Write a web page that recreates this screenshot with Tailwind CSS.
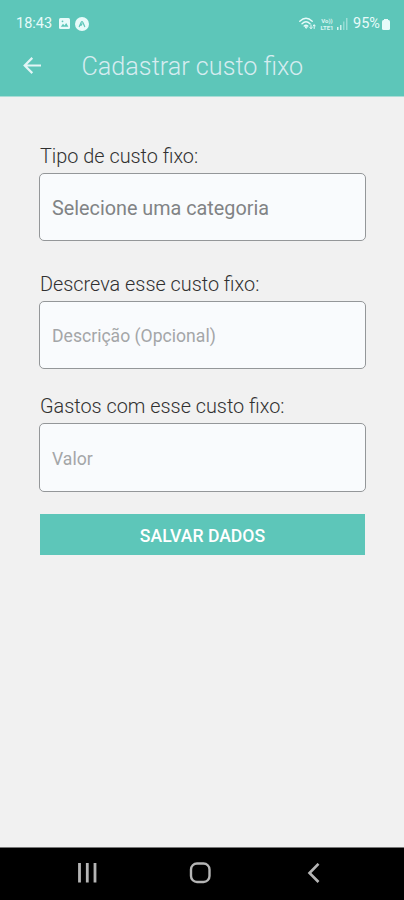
<!DOCTYPE html>
<html lang="pt-BR">
<head>
    <meta charset="UTF-8">
    <meta name="viewport" content="width=device-width, initial-scale=1.0">
    <title>Cadastrar custo fixo</title>
    <script src="https://cdn.jsdelivr.net/npm/@tailwindcss/browser@4"></script>
    <style>
        body { font-family: Roboto, 'Liberation Sans', sans-serif; }
    </style>
</head>
<body class="bg-[#f1f1f1]">
    <div class="flex flex-col h-[900px] w-[404px] overflow-hidden">
        <header class="h-[97px] shrink-0 bg-[#5dc6b9] border-b border-[#a9ddd6]">
            <!-- Status bar -->
            <div class="flex h-[47px] items-center pl-4 pr-[14px] text-[#e8fbfa]">
                <span class="w-[37px] text-[14.5px] whitespace-nowrap">18:43</span>
                <svg class="ml-[6px] w-[11px] h-[11px]" viewBox="0 0 11 11">
                    <rect width="11" height="11" rx="1.5" fill="currentColor"/>
                    <path d="M1.8 8.8 4 5.8l1.5 1.7L7.2 5l2.2 3.8z" fill="#5dc6b9"/>
                    <circle cx="3.5" cy="3.3" r=".9" fill="#5dc6b9"/>
                </svg>
                <svg class="ml-[5px] w-[14px] h-[14px]" viewBox="0 0 14 14">
                    <circle cx="7" cy="7" r="7" fill="currentColor"/>
                    <path d="M4.3 9.6 6.2 5.2Q7 3.8 7.8 5.2l1.9 4.4M6 8.4 7 6.9" fill="none" stroke="#5dc6b9" stroke-width="1.2" stroke-linecap="round"/>
                </svg>
                <div class="ml-auto flex items-center">
                    <svg class="w-[17px] h-[13px]" viewBox="0 0 17 13" fill="none" stroke="currentColor" stroke-width="1.4" stroke-linecap="round">
                        <path d="M.8 4.2Q7 -1.5 13.2 4.2M3 6.7Q7 3 11 6.7M5.2 9Q7 7.5 8.8 9"/>
                        <path d="M7 11.2 5.9 9.7h2.2z" fill="currentColor" stroke-width=".8"/>
                        <path d="M12 8v3.5M10.9 10.5l1.1 1.2 1.1-1.2M15.2 11.5V8M14.1 9l1.1-1.2L16.3 9" stroke-width="1"/>
                    </svg>
                    <div class="ml-[4px] w-[14px] flex flex-col items-center text-[6px] leading-[7px] font-bold opacity-90">
                        <span>Vo))</span>
                        <span>LTE1</span>
                    </div>
                    <svg class="ml-[3px] w-[11px] h-[12px]" viewBox="0 0 11 12" fill="currentColor">
                        <rect y="9" width="1.5" height="3" opacity=".9"/>
                        <rect x="3" y="7" width="1.5" height="5" opacity=".8"/>
                        <rect x="6" y="3.5" width="1.5" height="8.5" opacity=".4"/>
                        <rect x="9" width="1.5" height="12" opacity=".45"/>
                    </svg>
                    <span class="ml-[5px] w-[28px] text-[14.5px] whitespace-nowrap">95%</span>
                    <svg class="ml-[1px] mt-[1px] w-[8px] h-[11px]" viewBox="0 0 8 11" fill="currentColor">
                        <rect x="2" width="4" height="2"/>
                        <rect y="1" width="8" height="10" rx="1.5"/>
                    </svg>
                </div>
            </div>
            <!-- App bar -->
            <div class="flex h-[38px] items-center pl-[23px]">
                <svg class="w-[19px] h-[18px]" viewBox="0 0 19 18" fill="none" stroke="#e3f5f6" stroke-width="2.2">
                    <path d="M18 8.5H2M9.3 .9 1.7 8.5l7.6 7.6"/>
                </svg>
                <h1 class="ml-[39.5px] pt-px text-[25.2px] font-light text-[#d6ecf0] whitespace-nowrap">Cadastrar custo fixo</h1>
            </div>
        </header>

        <!-- Form -->
        <main class="flex-1 px-[39px] pt-[47px]">
            <form onsubmit="event.preventDefault()">
                <label class="block h-[29px] pl-px text-[19.85px] leading-[26px] font-light text-[#303030]">Tipo de custo fixo:</label>
                <div class="flex h-[68px] w-[327px] items-center rounded-[5px] border border-[#949799] bg-[#f9fbfd] pl-3 pt-[4px] text-[19.8px] text-[#818385]">Selecione uma categoria</div>

                <label class="mt-[31px] block h-[29px] pl-px text-[19.85px] leading-[26px] font-light text-[#303030]">Descreva esse custo fixo:</label>
                <div class="flex h-[68px] w-[327px] items-center rounded-[5px] border border-[#949799] bg-[#f9fbfd] pl-3 pt-[3px] text-[17.6px] text-[#a4a6a8]">Descrição (Opcional)</div>

                <label class="mt-[25px] block h-[29px] pl-px text-[19.85px] leading-[26px] font-light text-[#303030]">Gastos com esse custo fixo:</label>
                <div class="flex h-[69px] w-[327px] items-center rounded-[5px] border border-[#949799] bg-[#f9fbfd] pl-3 pt-[3px] text-[17.6px] text-[#a4a6a8]">Valor</div>

                <button type="submit" class="mt-[22px] ml-px h-[41px] w-[325px] bg-[#5dc6b9] pt-[3px] text-[17.6px] font-medium text-white">SALVAR DADOS</button>
            </form>
        </main>

        <!-- Android navigation bar -->
        <nav class="flex h-[53px] shrink-0 border-t border-[#777] bg-black text-[#b5b5b5]">
            <svg class="ml-[77px] mt-[15px] w-[20px] h-[20px]" viewBox="0 0 20 20" fill="none" stroke="currentColor" stroke-width="2.8">
                <path d="M2.5 0v19.5M10.3 0v19.5M18 0v19.5"/>
            </svg>
            <svg class="ml-[92px] mt-[14px] w-[22px] h-[22px]" viewBox="0 0 22 22" fill="none" stroke="currentColor" stroke-width="2.4">
                <rect x="2" y="1.5" width="18.5" height="18.5" rx="6"/>
            </svg>
            <svg class="ml-[96px] mt-[15px] w-[13px] h-[20px]" viewBox="0 0 13 20" fill="none" stroke="currentColor" stroke-width="2.6">
                <path d="M11.5 .8 2.5 10l9 9"/>
            </svg>
        </nav>
    </div>
</body>
</html>
